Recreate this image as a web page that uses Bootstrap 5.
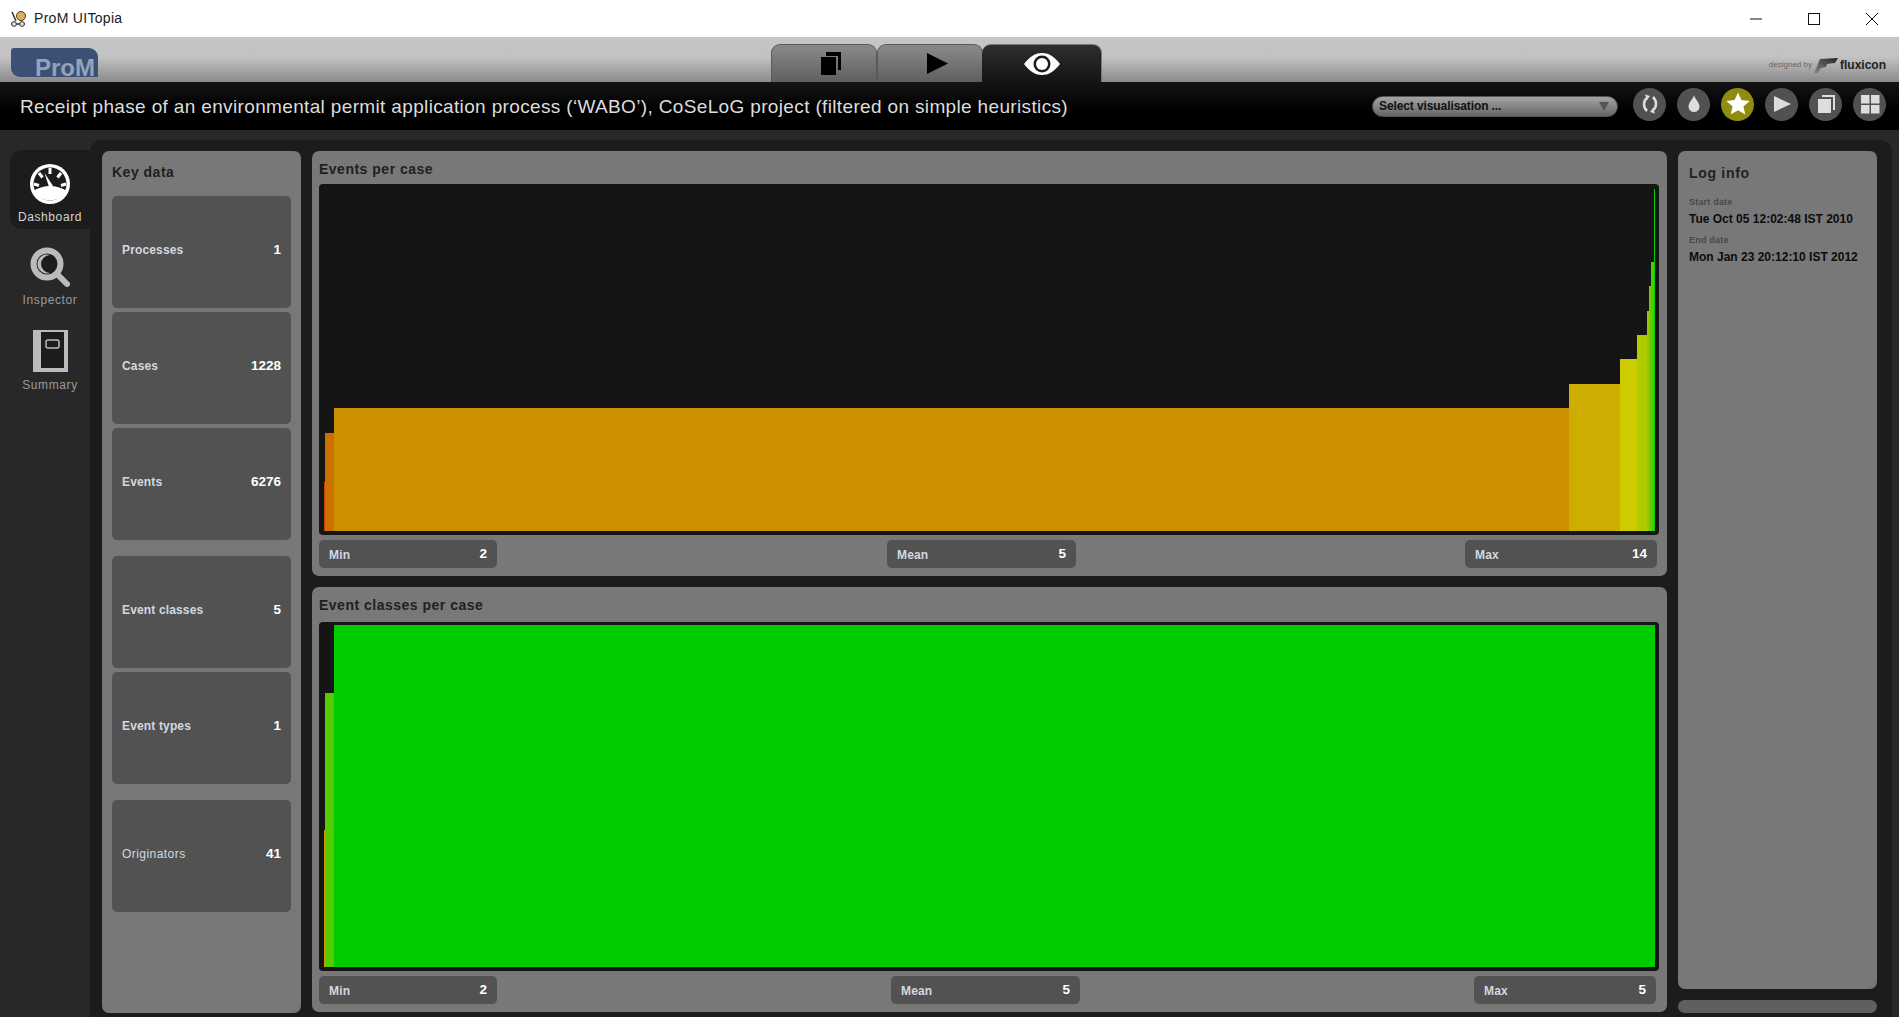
<!DOCTYPE html>
<html lang="en">
<head>
    <meta charset="UTF-8">
    <title>ProM UITopia</title>
    <link href="https://cdn.jsdelivr.net/npm/bootstrap@5.3.3/dist/css/bootstrap.min.css" rel="stylesheet">
    <style>
        html, body { height: 100%; overflow: hidden; }
        body { font-family: "Liberation Sans", Arial, sans-serif; background: #282828; }
        .app-shell { height: 1017px; }

        .win-title { height: 37px; background: #fff; color: #222; font-size: 14px; letter-spacing: .3px; padding-left: 10px; }
        .win-title span { margin-left: 6px; }
        .win-ctrls { margin-right: -2px; }
        .win-btn { width: 58px; height: 37px; }

        .top-head { height: 45px; background: linear-gradient(#c6c6c6 0, #c2c2c2 45%, #8a8a8a 100%); }
        .prom-logo { width: 87px; height: 29px; margin: 11px 0 0 11px; overflow: hidden; background: #3b5074;
            border-radius: 3px 9px 0 9px; color: #93a3bb; font-weight: 700; font-size: 24px;
            line-height: 39px; padding-left: 24px; white-space: nowrap; }
        .top-tabs { margin-left: 673px; margin-top: 7px; }
        .top-tab { width: 106px; height: 38px; padding-left: 14px; background: linear-gradient(#8a8a8a, #5f5f5f); border: 1px solid #5a5a5a;
            border-bottom: 0; border-radius: 9px 9px 0 0; }
        .top-tab.on { width: 120px; padding-left: 0; background: linear-gradient(#2e2e2e, #141414); border-color: #777; border-left: 0; margin-left: -1px; }
        .flux { margin-right: 13px; margin-top: 19px; color: #666; font-size: 8px; }
        .flux b { color: #222; font-size: 12px; }
        .wing-mark { margin: 0 2px; }

        .black-bar { height: 48px; background: linear-gradient(#141414, #000 60%); padding: 0 13px 0 20px; }
        .doc-title { color: #ddd; font-size: 19px; letter-spacing: .35px; margin-top: 2px; }
        .vis-select { width: 246px; height: 21px; margin-right: 15px; border-radius: 11px; padding: 0 8px 0 6px;
            background: linear-gradient(#a4a4a4, #666); border: 1px solid #555; color: #111; font-weight: 700; font-size: 12px; letter-spacing: -.1px; }
        .vis-arrow { width: 0; height: 0; border-left: 5px solid transparent; border-right: 5px solid transparent; border-top: 9px solid #555; }
        .round-row { gap: 11px; }
        .round-btn { width: 33px; height: 33px; border-radius: 50%; background: #515151; margin-top: -4px; }
        .round-btn.on { background: #8f8c12; }

        .body-row { height: 887px; }
        .side-nav { width: 90px; padding: 20px 0 0 10px; }
        .side-item { width: 80px; height: 79px; padding-top: 14px; color: #9a9a9a; font-size: 12px; letter-spacing: .6px; border-radius: 12px 0 0 12px; margin-bottom: 4px; }
        .side-item.on { background: #1c1c1c; color: #d6d6d6; }
        .side-item svg { display: block; margin-bottom: 4px; }
        .work-area { flex: 1; margin: 10px 7px 0 0; padding: 11px 15px 4px 12px; background: #1c1c1c; border-radius: 12px 12px 0 0; gap: 11px; }

        .pane { background: #787878; border-radius: 7px; }
        .pane-title { color: #1f1f1f; font-weight: 700; font-size: 14px; letter-spacing: .5px; }
        .key-pane { width: 199px; padding: 0 10px; }
        .key-pane .pane-title { height: 45px; padding-top: 11px; }
        .key-tile { height: 112px; margin-bottom: 4px; padding: 0 10px 3px; background: #525252; border-radius: 5px; }
        .key-tile.split { margin-bottom: 16px; }
        .key-tile .tile-name { margin-top: -2px; }
        .tile-name { color: #d2d8e0; font-size: 12px; font-weight: 700; letter-spacing: .15px; }
        .tile-name.thin { font-weight: 400; letter-spacing: .45px; }
        .tile-val { color: #fff; font-size: 13.5px; font-weight: 700; }

        .chart-col { width: 1355px; gap: 11px; }
        .chart-pane { height: 425px; padding: 0 8px 8px 7px; }
        .chart-head { height: 33px; padding-top: 10px; line-height: 16px; }
        .chart-head.taller { height: 35px; }
        .chart-box { flex: 1; padding: 5px 4px 4px 5px; background: #151515; border-radius: 4px; min-height: 0; }
        .chart-bar { flex: none; }
        .stat-row { margin-top: 5px; }
        .stat-pill { height: 28px; padding: 1px 10px 0; background: #525252; border-radius: 5px; }
        .pill-a { width: 178px; }
        .pill-b { width: 189px; }
        .pill-c { width: 192px; }
        .pill-d { width: 182px; margin-right: 3px; }
        .gap-a { margin-left: 390px; margin-right: 389px; }
        .gap-b { margin-left: 394px; margin-right: 394px; }

        .log-col { width: 199px; }
        .log-pane { height: 838px; padding: 13px 11px; }
        .log-pane h6 { font-size: 14px; font-weight: 700; color: #222; letter-spacing: .7px; margin: 0 0 15px; line-height: 18px; }
        .log-key { color: #484848; font-size: 9px; font-weight: 700; letter-spacing: .2px; line-height: 11px; margin-bottom: 2px; }
        .log-val { color: #0c0c0c; font-size: 12px; font-weight: 700; line-height: 18px; margin-bottom: 7px; white-space: nowrap; }
        .log-scroll { height: 13px; margin-top: 11px; background: #5f5f5f; border-radius: 7px; }
    </style>
</head>
<body>
<div class="app-shell d-flex flex-column">

    <div class="win-title d-flex align-items-center">
        <svg width="18" height="18" viewBox="0 0 18 18">
            <circle cx="11" cy="6" r="4.5" fill="#d8b25a" stroke="#4a3a1a"/>
            <path d="M2 2l4 9M1 14h14" stroke="#333" stroke-width="1.5" fill="none"/>
            <circle cx="4" cy="14" r="2.4" fill="#ddd" stroke="#333"/>
            <circle cx="12" cy="14" r="2.4" fill="#ddd" stroke="#333"/>
        </svg>
        <span>ProM UITopia</span>
        <div class="win-ctrls ms-auto d-flex">
            <div class="win-btn d-flex align-items-center justify-content-center">
                <svg width="12" height="12" viewBox="0 0 12 12"><path d="M0 6h12" stroke="#111"/></svg>
            </div>
            <div class="win-btn d-flex align-items-center justify-content-center">
                <svg width="12" height="12" viewBox="0 0 12 12"><rect x=".5" y=".5" width="11" height="11" fill="none" stroke="#111"/></svg>
            </div>
            <div class="win-btn d-flex align-items-center justify-content-center">
                <svg width="12" height="12" viewBox="0 0 12 12"><path d="M0 0l12 12M12 0L0 12" stroke="#111"/></svg>
            </div>
        </div>
    </div>

    <div class="top-head d-flex">
        <div class="prom-logo">ProM</div>
        <div class="top-tabs d-flex">
            <div class="top-tab d-flex align-items-center justify-content-center">
                <svg width="22" height="24" viewBox="0 0 22 24"><path d="M6 0h15v18h-3V4H6z" fill="#000"/><path d="M1 5h15v18H1z" fill="#000"/></svg>
            </div>
            <div class="top-tab d-flex align-items-center justify-content-center">
                <svg width="21" height="21" viewBox="0 0 21 21"><path d="M0 0l21 10.500L0 21z" fill="#000"/></svg>
            </div>
            <div class="top-tab on d-flex align-items-center justify-content-center">
                <svg width="36" height="22" viewBox="0 0 36 22"><path d="M0 11C6 3 12 0 18 0s12 3 18 11c-6 8-12 11-18 11S6 19 0 11z" fill="#fff"/><circle cx="18" cy="11" r="8.500" fill="#1c1c1c"/><circle cx="18" cy="11" r="6" fill="#fff"/></svg>
            </div>
        </div>
        <div class="flux ms-auto d-flex align-items-center align-self-start">
            <span>designed by</span>
            <svg class="wing-mark" width="24" height="15" viewBox="0 0 24 15">
                <defs><linearGradient id="wing_fade" x1="1" y1="0" x2="0" y2="1"><stop offset="0" stop-color="#222"/><stop offset="1" stop-color="#888"/></linearGradient></defs>
                <path d="M6 1L24 0l-3 5-8 1-1 3-5 1-3 5-4 0z" fill="url(#wing_fade)"/>
            </svg>
            <b>fluxicon</b>
        </div>
    </div>

    <div class="black-bar d-flex align-items-center">
        <div class="doc-title">Receipt phase of an environmental permit application process (‘WABO’), CoSeLoG project (filtered on simple heuristics)</div>
        <div class="vis-select ms-auto d-flex align-items-center justify-content-between">
            <span>Select visualisation ...</span>
            <i class="vis-arrow"></i>
        </div>
        <div class="round-row d-flex" id="round_btns"></div>
    </div>

    <div class="body-row d-flex">
        <div class="side-nav">
            <div class="side-item on d-flex flex-column align-items-center">
                <svg width="40" height="40" viewBox="0 0 40 40">
                    <circle cx="20" cy="20" r="20" fill="#fff"/>
                    <circle cx="20" cy="20" r="16.500" fill="#1c1c1c"/>
                    <path d="M3 27 Q20 17 37 27 A20 20 0 0 1 3 27z" fill="#fff"/>
                    <path d="M20 4v6M9 9l3.500 4.500M31 9l-3.500 4.500M4 20l5 1.500M36 20l-5 1.500" stroke="#fff" stroke-width="3"/>
                    <path d="M14.500 9L19 23l4-1z" fill="#fff"/>
                </svg>
                Dashboard
            </div>
            <div class="side-item d-flex flex-column align-items-center">
                <svg width="40" height="40" viewBox="0 0 40 40">
                    <path d="M25 25l12 12" stroke="#bbb" stroke-width="6" stroke-linecap="round"/>
                    <circle cx="17" cy="17" r="13.500" fill="#1c1c1c" stroke="#bbb" stroke-width="6"/>
                    <path d="M20 8a9.500 9.500 0 1 0 0 18a8 8 0 1 1 0-18z" fill="#bbb"/>
                </svg>
                Inspector
            </div>
            <div class="side-item d-flex flex-column align-items-center">
                <svg width="36" height="42" viewBox="0 0 36 42">
                    <path d="M1 0h35v42H1z" fill="#bbb"/>
                    <path d="M9 2h23v36H9z" fill="#1c1c1c"/>
                    <rect x="14" y="10" width="13" height="8" rx="2" fill="none" stroke="#bbb" stroke-width="1.500"/>
                </svg>
                Summary
            </div>
        </div>

        <div class="work-area d-flex">
            <div class="pane key-pane">
                <div class="pane-title">Key data</div>
                <div id="key_tiles"></div>
            </div>

            <div class="chart-col d-flex flex-column">
                <div class="pane chart-pane d-flex flex-column">
                    <div class="pane-title chart-head">Events per case</div>
                    <div class="chart-box d-flex align-items-end" id="chart_events"></div>
                    <div class="stat-row d-flex">
                        <div class="stat-pill pill-a d-flex align-items-center justify-content-between"><span class="tile-name">Min</span><span class="tile-val">2</span></div>
                        <div class="stat-pill pill-b gap-a d-flex align-items-center justify-content-between"><span class="tile-name">Mean</span><span class="tile-val">5</span></div>
                        <div class="stat-pill pill-c d-flex align-items-center justify-content-between"><span class="tile-name">Max</span><span class="tile-val">14</span></div>
                    </div>
                </div>
                <div class="pane chart-pane d-flex flex-column">
                    <div class="pane-title chart-head taller">Event classes per case</div>
                    <div class="chart-box d-flex align-items-end" id="chart_classes"></div>
                    <div class="stat-row d-flex">
                        <div class="stat-pill pill-a d-flex align-items-center justify-content-between"><span class="tile-name">Min</span><span class="tile-val">2</span></div>
                        <div class="stat-pill pill-b gap-b d-flex align-items-center justify-content-between"><span class="tile-name">Mean</span><span class="tile-val">5</span></div>
                        <div class="stat-pill pill-d d-flex align-items-center justify-content-between"><span class="tile-name">Max</span><span class="tile-val">5</span></div>
                    </div>
                </div>
            </div>

            <div class="log-col">
                <div class="pane log-pane">
                    <h6>Log info</h6>
                    <div class="log-key">Start date</div>
                    <div class="log-val">Tue Oct 05 12:02:48 IST 2010</div>
                    <div class="log-key">End date</div>
                    <div class="log-val">Mon Jan 23 20:12:10 IST 2012</div>
                </div>
                <div class="log-scroll"></div>
            </div>
        </div>
    </div>
</div>

<script src="https://cdn.jsdelivr.net/npm/bootstrap@5.3.3/dist/js/bootstrap.bundle.min.js"></script>
<script>
    var tiles = [
        ["Processes", "1", false, false],
        ["Cases", "1228", false, false],
        ["Events", "6276", true, false],
        ["Event classes", "5", false, false],
        ["Event types", "1", true, false],
        ["Originators", "41", false, true]
    ];

    function desenhaTiles() {
        let html = "";
        for (let i = 0; i < tiles.length; i++) {
            html += `
                <div class="key-tile ${tiles[i][2] ? "split" : ""} d-flex align-items-center justify-content-between">
                    <span class="tile-name ${tiles[i][3] ? "thin" : ""}">${tiles[i][0]}</span>
                    <span class="tile-val">${tiles[i][1]}</span>
                </div>`;
        }
        document.getElementById("key_tiles").innerHTML = html;
    }

    // width, height, colour of every step of a chart
    var eventos = [
        [1, 49, "#cc3d00"], [9, 98, "#cc7000"], [1235, 123, "#cc8f00"], [51, 147, "#ccad00"],
        [17, 172, "#cccc00"], [10, 196, "#aecc00"], [2, 220, "#90cc00"], [2, 245, "#70cc00"],
        [3, 269, "#50cc00"], [1, 342, "#00cc00"]
    ];
    var classes = [[1, 137, "#cc9900"], [9, 274, "#55cc00"], [1321, 342, "#00cc00"]];

    function desenhaBarras(id, barras) {
        let html = "";
        for (let i = 0; i < barras.length; i++) {
            html += `<div class="chart-bar" style="width:${barras[i][0]}px;height:${barras[i][1]}px;background:${barras[i][2]}"></div>`;
        }
        document.getElementById(id).innerHTML = html;
    }

    var icones = [
        '<path d="M10 7C6 10 6 16 10 20M16 6C20 10 20 16 16 19" fill="none" stroke="#ddd" stroke-width="2.500"/><path d="M8 3.500l5 1.500-3 4zM18 22.500l-5-1.500 3-4z" fill="#ddd"/>',
        '<path d="M13 4.500c1.500 4 5.500 7 5.500 11a5.500 5.500 0 0 1-11 0c0-4 4-7 5.500-11z" fill="#ddd"/>',
        '<path d="M13 1.500l3.400 7.600 8.300.8-6.300 5.500 1.900 8.100-7.300-4.300-7.300 4.300 1.900-8.100L1.300 9.900l8.300-.8z" fill="#fff"/>',
        '<path d="M5 5l17 8-17 8z" fill="#ddd"/>',
        '<path d="M9 4h13v15h-2V6H9z" fill="#ddd"/><path d="M5 8h13v14H5z" fill="#ddd"/>',
        '<path d="M4 4h8.500v8.500H4zM14 4h8.500v8.500H14zM4 14h8.500v8.500H4zM14 14h8.500v8.500H14z" fill="#ddd"/>'
    ];

    function desenhaBotoes() {
        let html = "";
        for (let i = 0; i < icones.length; i++) {
            html += `<div class="round-btn ${i == 2 ? "on" : ""} d-flex align-items-center justify-content-center"><svg width="26" height="26" viewBox="0 0 26 26">${icones[i]}</svg></div>`;
        }
        document.getElementById("round_btns").innerHTML = html;
    }

    desenhaTiles();
    desenhaBarras("chart_events", eventos);
    desenhaBarras("chart_classes", classes);
    desenhaBotoes();
</script>
</body>
</html>
